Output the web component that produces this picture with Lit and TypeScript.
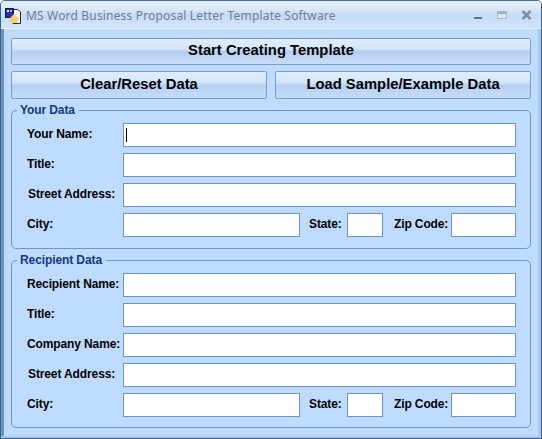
import { LitElement, html, css } from "lit";
import { customElement } from "lit/decorators.js";

@customElement("app-root")
export class AppRoot extends LitElement {
  static styles = css`
    :host { display: block; width: 542px; height: 439px; overflow: hidden; font-family: "Liberation Sans", Arial, sans-serif; }
    .window { width: 542px; height: 439px; box-sizing: border-box; background: #bfdbff; display: flex; flex-direction: column;
      border: 1px solid #3a5f8f; border-top-color: #4a6d9c; border-radius: 5px 5px 0 0; overflow: hidden; position: relative; }
    .titlebar { height: 26px; flex: none; display: flex; align-items: center; padding: 1px 8px 0 4px; gap: 4px; box-sizing: content-box;
      background: linear-gradient(#e4effc 0, #d9e8fa 30%, #c6dcf6 50%, #d0e3fa 100%); border-bottom: 1px solid #eaf3ff; }
    .app-icon { width: 17px; height: 17px; flex: none; margin-top: 3px; }
    .title { flex: 1; font-family: "Noto Sans", sans-serif; font-size: 12px; color: #6f7d90; letter-spacing: 0.17px; padding-top: 1px; }
    .controls { display: flex; align-items: center; margin-right: 1px; }
    .ctl { display: block; }
    .max { margin-left: 14px; }
    .close { margin-left: 14px; }
    .body { flex: 1; display: flex; flex-direction: column; padding: 9px 7px 0 7px; border-left: 3px solid #6f92c0; border-right: 3px solid #a9c6ec; box-sizing: border-box; }
    .inner { display: flex; flex-direction: column; gap: 6px; }
    button { font: bold 14.8px "Liberation Sans", Arial, sans-serif; color: #000; box-sizing: border-box; height: 27px; padding: 0 0 4px; border: 1px solid #7c9ccb; border-radius: 2px;
      background: linear-gradient(#e0edfd 0, #d3e5fb 40%, #b5d0f2 50%, #c6dcf8 100%); }
    .two { display: grid; grid-template-columns: 256px 256px; gap: 8px; }
    .two button { height: 28px; padding-bottom: 2px; }
    fieldset { margin: 5px 0 0; padding: 0 14px 11px 15px; border: 1px solid #6a93cf; border-radius: 5px; box-sizing: border-box; display: flex; flex-direction: column; gap: 6px; min-width: 0; }
    .rec { padding-bottom: 10px; }
    legend { font: bold 12px "Liberation Sans", Arial, sans-serif; letter-spacing: -0.1px; color: #14397a; padding: 0 4px 0 3px; margin-left: -10px; line-height: 12px; }
    .row { display: flex; align-items: center; height: 24px; }
    .row:first-of-type { margin-top: 7px; }
    label { font: bold 12px "Liberation Sans", Arial, sans-serif; letter-spacing: -0.12px; color: #000; white-space: nowrap; padding-bottom: 2px; }
    .lead { width: 96px; flex: none; }
    .nudge { padding-left: 1px; width: 95px; }
    input { box-sizing: border-box; height: 24px; border: 1px solid #6a93cf; background: #fff; padding: 0 2px; margin: 0; border-radius: 0; outline: none; font: 12px "Liberation Sans", Arial, sans-serif; display: block; }
    .full { flex: 1; min-width: 0; }
    .city { width: 177px; flex: none; }
    .state-l { margin-left: 9px; width: 38px; }
    .state { width: 36px; flex: none; }
    .zip-l { margin-left: 11px; width: 57px; }
    .zip { width: 65px; flex: none; }
    .caret { position: absolute; left: 125px; top: 127px; width: 1px; height: 14px; background: #000; }
    .bottom-edge { position: absolute; left: 0; right: 0; bottom: 0; height: 2px; background: #a9c6ec; }
  `;

  private city() {
    return html`<div class="row">
      <label class="lead">City:</label><input class="city" />
      <label class="state-l">State:</label><input class="state" />
      <label class="zip-l">Zip Code:</label><input class="zip" />
    </div>`;
  }

  render() {
    return html`<div class="window">
      <div class="titlebar">
        <svg class="app-icon" viewBox="0 0 17 17">
          <path d="M8 1.5h5l2.5 2.5v11.5H8z" fill="#f7f7f2" stroke="#2c2c2c" stroke-width="1"/>
          <rect x="0.5" y="0.5" width="8" height="9" fill="#27359a" stroke="#10183f"/>
          <rect x="2" y="2" width="2" height="2" fill="#dfe6ff"/><rect x="5" y="2" width="2" height="2" fill="#8fa2ee"/>
          <path d="M4 11l5-5 5 4-2 5H7z" fill="#f4d078"/>
        </svg>
        <span class="title">MS Word Business Proposal Letter Template Software</span>
        <div class="controls">
          <svg class="ctl" width="9" height="10" viewBox="0 0 9 10"><rect x="0" y="7" width="8" height="2" fill="#5f7388"/></svg>
          <svg class="ctl max" width="10" height="10" viewBox="0 0 10 10"><rect x="0.5" y="1.5" width="9" height="7" fill="#dbe6f3" stroke="#a9b8ca"/><rect x="1" y="2" width="8" height="2" fill="#9badc2"/></svg>
          <svg class="ctl close" width="11" height="10" viewBox="0 0 11 10"><path d="M1.5 1l8 8M9.5 1l-8 8" stroke="#7a90a8" stroke-width="2.6"/></svg>
        </div>
      </div>
      <div class="body">
        <div class="inner">
          <button>Start Creating Template</button>
          <div class="two"><button>Clear/Reset Data</button><button>Load Sample/Example Data</button></div>
        </div>
        <fieldset>
          <legend>Your Data</legend>
          <div class="row"><label class="lead">Your Name:</label><input class="full" /></div>
          <div class="row"><label class="lead">Title:</label><input class="full" /></div>
          <div class="row"><label class="lead nudge">Street Address:</label><input class="full" /></div>
          ${this.city()}
        </fieldset>
        <fieldset class="rec">
          <legend>Recipient Data</legend>
          <div class="row"><label class="lead">Recipient Name:</label><input class="full" /></div>
          <div class="row"><label class="lead">Title:</label><input class="full" /></div>
          <div class="row"><label class="lead">Company Name:</label><input class="full" /></div>
          <div class="row"><label class="lead nudge">Street Address:</label><input class="full" /></div>
          ${this.city()}
        </fieldset>
      </div>
      <div class="caret"></div>
      <div class="bottom-edge"></div>
    </div>`;
  }
}
